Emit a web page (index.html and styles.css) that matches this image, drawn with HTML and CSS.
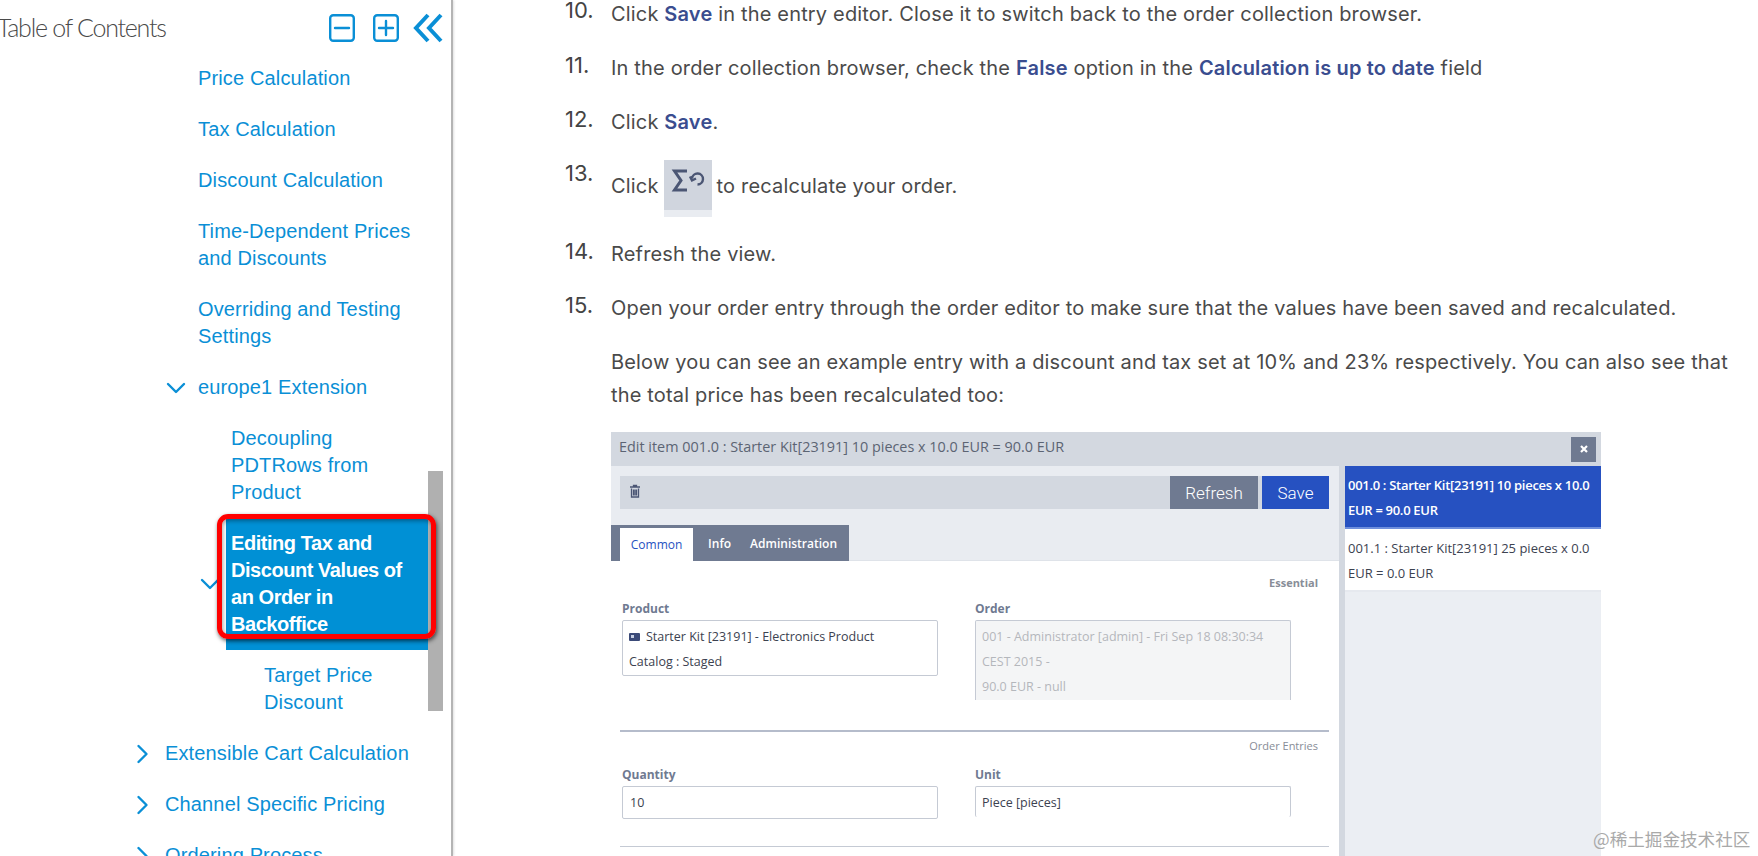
FILE: index.html
```html
<!DOCTYPE html>
<html lang="en">
<head>
<meta charset="utf-8">
<title>Editing Tax and Discount Values</title>
<link rel="stylesheet" href="styles.css">
</head>
<body>
<aside class="sidebar">
  <header class="toc-head">
    <h2 class="toc-title">Table of Contents</h2>
    <div class="toc-tools">
      <svg class="tool" width="26" height="28" viewBox="0 0 26 28"><rect x="1.2" y="1.2" width="23.6" height="25.6" rx="3" class="ico"/><path d="M6 14H20" class="ico"/></svg>
      <svg class="tool" width="26" height="28" viewBox="0 0 26 28"><rect x="1.2" y="1.2" width="23.6" height="25.6" rx="3" class="ico"/><path d="M6 14H20M13 7V21" class="ico"/></svg>
      <svg class="tool-collapse" width="30" height="30" viewBox="0 0 30 30"><path d="M15 2 3 15l12 13M28 2 16 15l12 13" class="ico ico-heavy"/></svg>
    </div>
  </header>
  <nav class="tree">
    <div class="row d1"><span class="slot"></span><a>Price Calculation</a></div>
    <div class="row d1"><span class="slot"></span><a>Tax Calculation</a></div>
    <div class="row d1"><span class="slot"></span><a>Discount Calculation</a></div>
    <div class="row d1"><span class="slot"></span><a>Time-Dependent Prices<br>and Discounts</a></div>
    <div class="row d1"><span class="slot"></span><a>Overriding and Testing<br>Settings</a></div>
    <div class="row d1"><span class="slot"><svg width="20" height="12" viewBox="0 0 20 12"><path d="M2 2l8 8 8-8" class="ico"/></svg></span><a>europe1 Extension</a></div>
    <div class="row d2"><span class="slot"></span><a>Decoupling<br>PDTRows from<br>Product</a></div>
    <div class="row d2 row-active"><span class="slot slot-active"><svg width="20" height="12" viewBox="0 0 20 12"><path d="M2 2l8 8 8-8" class="ico"/></svg></span><a class="active">Editing Tax and<br>Discount Values of<br>an Order in<br>Backoffice</a></div>
    <div class="row d3"><span class="slot"></span><a>Target Price<br>Discount</a></div>
    <div class="row d0"><span class="slot"><svg width="14" height="20" viewBox="0 0 14 20"><path d="M2.5 2l8 8-8 8" class="ico"/></svg></span><a>Extensible Cart Calculation</a></div>
    <div class="row d0"><span class="slot"><svg width="14" height="20" viewBox="0 0 14 20"><path d="M2.5 2l8 8-8 8" class="ico"/></svg></span><a>Channel Specific Pricing</a></div>
    <div class="row d0"><span class="slot"><svg width="14" height="20" viewBox="0 0 14 20"><path d="M2.5 2l8 8-8 8" class="ico"/></svg></span><a>Ordering Process</a></div>
  </nav>
  <div class="scroll-thumb"></div>
  <div class="annotation"></div>
</aside>

<main class="main">
  <ol class="steps">
    <li class="step step-first"><span class="num">10.</span><p>Click <b>Save</b> in the entry editor. Close it to switch back to the order collection browser.</p></li>
    <li class="step"><span class="num">11.</span><p>In the order collection browser, check the <b>False</b> option in the <b>Calculation is up to date</b> field</p></li>
    <li class="step"><span class="num">12.</span><p>Click <b>Save</b>.</p></li>
    <li class="step step-icon"><span class="num">13.</span><p class="with-icon"><span>Click</span><span class="recalc"><svg class="recalc-ico" width="48" height="50" viewBox="0 0 48 50"><path d="M23 11H10.500L17 20.500 10.500 30H23" class="sigma"/><path d="M28 18.500a5.500 5.500 0 1 1 5.500 6M26 16.500l2 4 4-2" class="sigma sigma-thin"/></svg></span><span>to recalculate your order.</span></p></li>
    <li class="step"><span class="num">14.</span><p>Refresh the view.</p></li>
    <li class="step step-last"><span class="num">15.</span>
      <div class="step-body">
        <p>Open your order entry through the order editor to make sure that the values have been saved and recalculated.</p>
        <p class="note">Below you can see an example entry with a discount and tax set at 10% and 23% respectively. You can also see that the total price has been recalculated too:</p>
        <section class="shot">
          <div class="shot-title"><span class="shot-name">Edit item 001.0 : Starter Kit[23191] 10 pieces x 10.0 EUR = 90.0 EUR</span><span class="close"><svg width="10" height="10" viewBox="0 0 10 10"><path d="M2 2l6 6M8 2l-6 6" class="close-x"/></svg></span></div>
          <div class="shot-body">
            <div class="editor">
              <div class="editor-top">
                <div class="toolbar">
                  <svg class="trash" width="12" height="14" viewBox="0 0 12 14"><path d="M1 3h10M4.500 3V1.500h3V3M2.500 4.500V13h7V4.500M4.500 5.500V11.500M6 5.500V11.500M7.500 5.500V11.500" class="trash-line"/></svg>
                  <span class="btn btn-grey">Refresh</span>
                  <span class="btn btn-blue">Save</span>
                </div>
                <div class="tabs"><span class="tab tab-on">Common</span><span class="tab">Info</span><span class="tab">Administration</span></div>
              </div>
              <div class="form">
                <div class="caption caption-first">Essential</div>
                <div class="form-row">
                  <div class="field"><label>Product</label><div class="box box-product"><span class="ptext"><svg class="pico" width="11" height="9" viewBox="0 0 11 9"><rect y="1" width="11" height="8" rx="1" fill="#3b4a78"/><rect x="2" y="3" width="3" height="3" fill="#c7cfe3"/></svg>Starter Kit [23191] - Electronics Product</span><span class="ptext">Catalog : Staged</span></div></div>
                  <div class="field"><label>Order</label><div class="box box-order"><span class="ptext">001 - Administrator [admin] - Fri Sep 18 08:30:34</span><span class="ptext">CEST 2015 -</span><span class="ptext">90.0 EUR - null</span></div></div>
                </div>
                <div class="rule rule-heavy"></div>
                <div class="caption caption-light">Order Entries</div>
                <div class="form-row form-row-2">
                  <div class="field"><label>Quantity</label><div class="box box-qty">10</div></div>
                  <div class="field"><label>Unit</label><div class="box box-unit">Piece [pieces]</div></div>
                </div>
                <div class="rule rule-end"></div>
              </div>
            </div>
            <div class="entries">
              <div class="entry entry-on">001.0 : Starter Kit[23191] 10 pieces x 10.0<br>EUR = 90.0 EUR</div>
              <div class="entry">001.1 : Starter Kit[23191] 25 pieces x 0.0<br>EUR = 0.0 EUR</div>
            </div>
          </div>
        </section>
      </div>
    </li>
  </ol>
</main>
<div class="watermark">@稀土掘金技术社区</div>
</body>
</html>
```

FILE: styles.css
```css
* { box-sizing: border-box; }
html, body { margin: 0; height: 856px; overflow: hidden; background: #fff; }
body { display: flex; font-family: "Liberation Sans", Arial, sans-serif; }
p, ol, h2 { margin: 0; padding: 0; }

.sidebar {
  position: relative;
  flex: none;
  width: 453px;
  height: 856px;
  overflow: hidden;
  border-right: 2px solid #b4b4b4;
  box-shadow: 1px 0 2px rgba(0,0,0,.12);
}
.toc-head {
  display: flex;
  align-items: center;
  height: 54px;
  justify-content: space-between;
  padding-right: 8px;
}
.toc-title {
  margin-left: -3px;
  font: 300 25px/30px Lato, sans-serif;
  letter-spacing: -1.25px;
  color: #4a4a4a;
}
.toc-tools { display: flex; align-items: center; gap: 18px; margin-top: 2px; }
.tool-collapse { margin-left: -4px; }
.ico { fill: none; stroke: #0a8fd6; stroke-width: 2.4; stroke-linecap: round; stroke-linejoin: round; }
.ico-heavy { stroke-width: 4; stroke-linecap: butt; stroke-linejoin: miter; }

.tree { width: 428px; margin-top: -1px; }
.row {
  display: flex;
  font-size: 20px;
  line-height: 27px;
  letter-spacing: .14px;
  color: #0a8fd6;
}
.row a { padding: 12px 0; flex: 1; }
.slot { flex: none; width: 33px; display: flex; align-items: center; height: 51px; }
.d0 { padding-left: 132px; }
.d0 .slot svg { margin-left: 4px; }
.d1 { padding-left: 165px; }
.d2 { padding-left: 198px; }
.d3 { padding-left: 231px; }
.d1 .slot svg { margin-left: 1px; }
.slot-active { width: 0; height: auto; }
.slot-active svg { flex: none; margin-left: 2px; }
.row .active {
  margin-left: 28px;
  padding-left: 5px;
  background: #0090d5;
  color: #fff;
  font-weight: 700;
  letter-spacing: -.45px;
}
.scroll-thumb {
  position: absolute;
  left: 428px;
  top: 471px;
  width: 15px;
  height: 240px;
  background: #b0b0b0;
}
.annotation {
  position: absolute;
  left: 217px;
  top: 514px;
  width: 219px;
  height: 125px;
  border: 5px solid #f00;
  border-radius: 11px;
  box-shadow: 1px 2px 4px rgba(0,0,0,.65), inset 1px 2px 4px rgba(0,0,0,.35);
}

.main { flex: 1; min-width: 0; height: 856px; overflow: hidden; padding-left: 112px; color: #4a4a4a; }
.steps { list-style: none; font: 400 20px/33px Inter, sans-serif; letter-spacing: .17px; }
.step { display: flex; padding-bottom: 21px; }
.step-first { padding-bottom: 23.500px; }
.step-first p { line-height: 28px; }
.num { flex: none; width: 46px; font-size: 22px; line-height: 26px; letter-spacing: 0; color: #444; }
.step-first .num { line-height: 21px; }
.step b { color: #3a4d8f; font-weight: 600; }
.with-icon { display: flex; align-items: center; height: 57px; padding-bottom: 3.500px; }
.step-icon { align-items: flex-start; padding-bottom: 21px; }
.recalc {
  display: block;
  align-self: flex-start;
  width: 48px;
  height: 57px;
  margin: 0 5px 0 5px;
  background: linear-gradient(#d0d5de 0 50px, #e9ecf1 50px);
}
.recalc-ico { display: block; filter: blur(.5px); }
.sigma { fill: none; stroke: #4b5674; stroke-width: 3; }
.sigma-thin { stroke-width: 2.4; }
.step-body { flex: 1; min-width: 0; }
.note { margin-top: 21px; width: 1122px; }

.shot {
  margin-top: 20.700px;
  width: 990px;
  height: 480px;
  font: 400 12px/24px "Open Sans", sans-serif;
  letter-spacing: 0;
  color: #3c4250;
  background: #d3d8e0;
}
.shot-title {
  display: flex;
  align-items: center;
  justify-content: space-between;
  height: 34px;
  padding: 0 5px 0 8px;
  font-size: 14.400px;
  color: #5c6473;
}
.shot-name { margin-bottom: 4px; }
.close {
  display: flex; align-items: center; justify-content: center;
  width: 25px; height: 25px; background: #6f7a91;
}
.close-x { fill: none; stroke: #fff; stroke-width: 2.2; }
.shot-body { display: flex; gap: 6px; }
.editor { width: 728px; height: 446px; background: #fff; }
.editor-top { height: 95px; background: #e9ecf1; padding-top: 10px; border-bottom: 1px solid #dfe3e9; }
.toolbar {
  display: flex;
  align-items: center;
  height: 33px;
  margin: 0 10px 0 9px;
  background: #d3d8e0;
}
.trash { margin: 0 auto 4px 9px; }
.trash-line { fill: none; stroke: #4b5674; stroke-width: 1.300; }
.btn {
  display: flex; align-items: center; justify-content: center;
  height: 33px;
  padding-top: 1px;
  font: 300 17px/33px Roboto, sans-serif;
  color: #fff;
}
.btn-grey { width: 88px; background: #6f7a91; margin-right: 4px; }
.btn-blue { width: 67px; background: #2651c1; }
.tabs {
  display: flex;
  align-items: flex-end;
  width: 238px;
  height: 36px;
  margin-top: 16px;
  padding-left: 9px;
  background: #6f7a91;
  color: #fff;
  font-weight: 600;
}
.tab { padding: 0 12px 5px 15px; }
.tab:last-child { padding-left: 7px; }
.tab-on {
  width: 74px;
  height: 33px;
  line-height: 33px;
  padding: 0;
  text-align: center;
  background: #fff;
  color: #2651c1;
  font-weight: 400;
}
.form { padding: 10px 10px 0 9px; }
.caption { text-align: right; padding-right: 11px; font-size: 11px; line-height: 24px; font-weight: 700; color: #888d97; }
.caption-light { font-weight: 400; height: 24px; line-height: 20px; margin-top: 4px; }
.form-row { display: flex; gap: 37px; margin-top: 3px; padding-left: 2px; }
.form-row-2 { margin-top: 4px; }
.field { width: 316px; margin-top: -2px; }
.field label { display: block; height: 24px; font-weight: 700; font-size: 12px; line-height: 26px; color: #6f7a91; }
.box {
  border: 1px solid #c5cad4;
  border-radius: 2px;
  padding: 0 6px;
  background: #fff;
  color: #3c4250;
  font-size: 12.500px;
}
.ptext { display: block; height: 25px; line-height: 25px; white-space: nowrap; }
.pico { margin-right: 6px; }
.box-product { height: 56px; padding-top: 3px; }
.box-order { height: 80px; padding-top: 3px; background: #f4f5f6; border-bottom: 0; color: #b4b7bc; border-radius: 2px 2px 0 0; }
.box-qty { height: 33px; line-height: 31px; padding-left: 7px; }
.box-unit { height: 31px; line-height: 31px; border-bottom: 0; }
.rule { height: 1px; background: #c5cad4; }
.rule-heavy { height: 2px; margin-top: 30px; background: #b5bccb; }
.rule-end { margin-top: 27px; }
.entries { flex: 1; height: 446px; background: #ebeef3; }
.entry {
  height: 63px;
  padding: 7px 3px 0;
  background: #fff;
  font-size: 13px;
  line-height: 24.500px;
  white-space: nowrap;
  border-bottom: 2px solid #e6e9ef;
}
.entry-on { background: #2651c1; color: #fff; font-weight: 600; letter-spacing: -.3px; border-bottom-color: #6f8fdc; }

.watermark {
  position: absolute;
  left: 1593px;
  top: 828px;
  font: 400 17.600px/22px "Noto Sans CJK SC", sans-serif;
  color: #a9a9a9;
  white-space: nowrap;
}
```
